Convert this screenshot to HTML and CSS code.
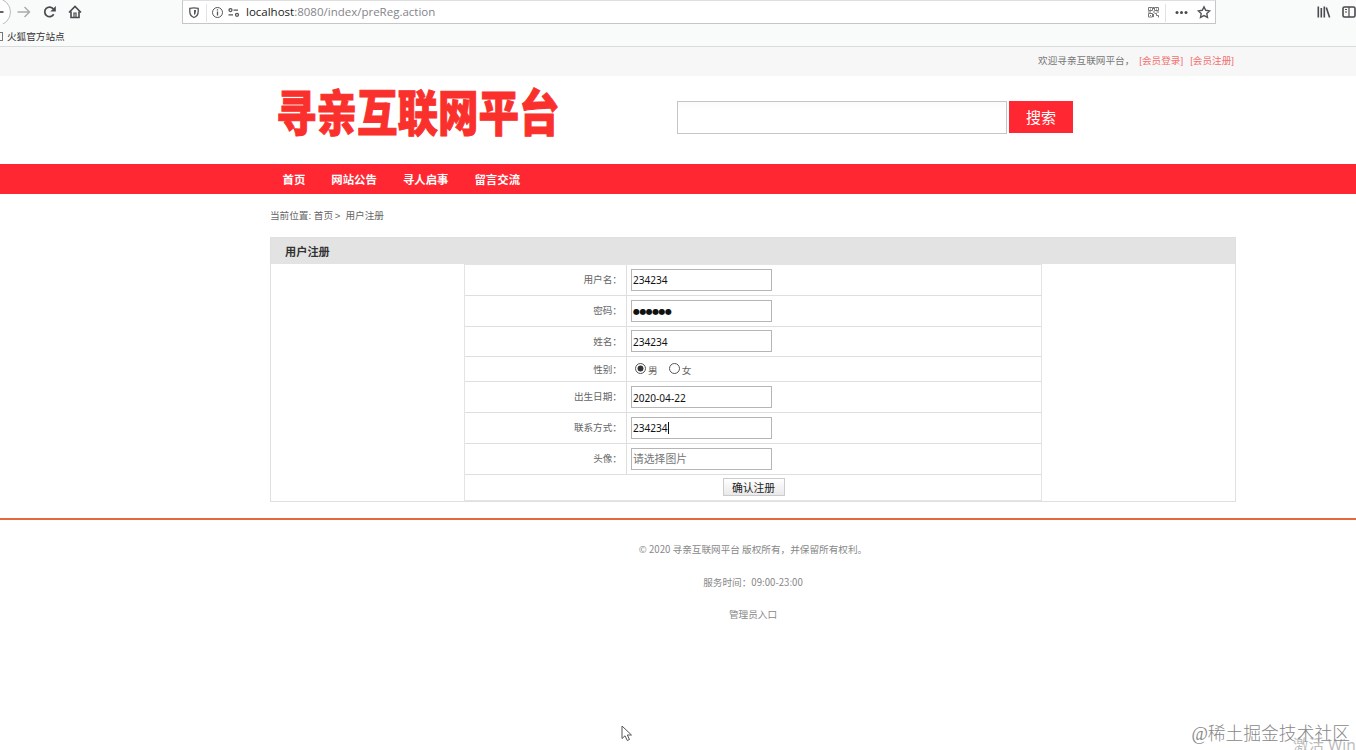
FILE: index.html
```html
<!DOCTYPE html>
<html lang="zh-CN">
<head>
<meta charset="UTF-8">
<meta name="viewport" content="width=device-width, initial-scale=1.0">
<title>用户注册</title>
<link rel="stylesheet" href="styles.css">
</head>
<body>

<div class="browser">
    <div class="toolbar">
        <svg class="nav-icons" width="90" height="24" viewBox="0 0 90 24" fill="none" stroke="#4a4a4f" stroke-width="1.7">
            <circle cx="-3" cy="12" r="13.5" fill="#fff" stroke="#bbb" stroke-width="1"/>
            <path d="M-6 12H3.500"/>
            <path d="M17.500 12H29.500M24.500 7L29.500 12L24.500 17" stroke="#aaa" stroke-width="1.4"/>
            <path d="M53.400 9A4.800 4.800 0 1 0 53.700 14.300"/>
            <path d="M55.800 6V11.500H50.300Z" fill="#4a4a4f" stroke="none"/>
            <path d="M69 12.500L75 6.500L81 12.500M71 11.500V17.500H79V11.500" stroke-width="1.6"/>
            <path d="M74 17V13H76V17" stroke-width="1.200"/>
        </svg>
        <div class="urlbar">
            <svg width="62" height="22" viewBox="0 0 62 22" fill="none" stroke="#55555a" stroke-width="1.300">
                <path d="M6.800 7.300Q11 6.300 15.200 7.300V10.500Q15.200 15 11 16.500Q6.800 15 6.800 10.500Z"/>
                <path d="M11 9V14Q13 13 13 10V9Z" fill="#55555a" stroke="none"/>
                <path d="M23.500 3V21" stroke="#e2e2e4" stroke-width="1"/>
                <circle cx="34.500" cy="11.500" r="5" stroke-width="1"/>
                <path d="M34.500 10.500V14.500M34.500 8.200V9.500"/>
                <circle cx="47.500" cy="9.100" r="1.500"/><path d="M50.500 9.100H55M45.500 13.800H50"/><circle cx="54" cy="13.800" r="1.500"/>
            </svg>
            <div class="url"><b>localhost</b>:8080/index/preReg.action</div>
            <svg class="url-actions" width="71" height="22" viewBox="0 0 71 22" fill="none" stroke="#55555a" stroke-width="1">
                <path d="M4.500 6.500H8.500V9.500H4.500ZM10.500 6.500H14.500V9.500H10.500ZM4.500 12.500H8.500V16H4.500ZM10.500 12.500H12.500V14.500H14.500V16.500M4 11H7M9 11H11M12.500 11H15M9.500 6V8M9.500 13V16M6 8H7M12 8H13M6 14.500H7" stroke="#77777b"/>
                <path d="M21.500 3V21" stroke="#e2e2e4"/>
                <g fill="#4a4a4f" stroke="none"><circle cx="33" cy="11.500" r="1.500"/><circle cx="37.500" cy="11.500" r="1.500"/><circle cx="42" cy="11.500" r="1.500"/></g>
                <path d="M60 5.800L61.700 9.300L65.600 9.900L62.800 12.600L63.500 16.400L60 14.600L56.500 16.400L57.200 12.600L54.400 9.900L58.300 9.300Z" stroke-width="1.400"/>
            </svg>
        </div>
        <svg class="side-icons" width="42" height="24" viewBox="0 0 42 24" fill="none" stroke="#4a4a4f" stroke-width="1.600">
            <path d="M4.300 6.500V17.500M7.300 8V17.500M10.300 6.500V17.500M12.300 7.500L15.600 17.500"/>
            <rect x="29" y="7" width="12" height="10" rx="1.500"/>
            <path d="M35 7V17M31 9.500H33M31 12H33" stroke-width="1.200"/>
        </svg>
    </div>
    <div class="bookmarks">
        <i class="page-icon"></i>
        <span>火狐官方站点</span>
    </div>
</div>

<div class="topbar">
    <span>欢迎寻亲互联网平台，</span>
    <a href="#">[会员登录]</a>
    <a href="#">[会员注册]</a>
</div>

<header class="header">
    <h1 class="logo">寻亲互联网平台</h1>
    <form class="search">
        <input type="text" class="search-input">
        <button type="button" class="search-btn">搜索</button>
    </form>
</header>

<nav class="nav">
    <a href="#">首页</a>
    <a href="#">网站公告</a>
    <a href="#">寻人启事</a>
    <a href="#">留言交流</a>
</nav>

<main class="main">
    <div class="crumb">当前位置: 首页 <span class="arrow">&gt;</span> 用户注册</div>
    <section class="panel">
        <h2>用户注册</h2>
        <form class="reg-form">
            <div class="row"><label>用户名：</label><div class="field"><input type="text" value="234234"></div></div>
            <div class="row"><label>密码：</label><div class="field"><input type="text" class="pwd" value="●●●●●●"></div></div>
            <div class="row"><label>姓名：</label><div class="field"><input type="text" value="234234"></div></div>
            <div class="row row-sex"><label>性别：</label>
                <div class="field">
                    <i class="radio checked"></i><span>男</span>
                    <i class="radio female"></i><span>女</span>
                </div>
            </div>
            <div class="row"><label>出生日期：</label><div class="field"><input type="text" value="2020-04-22"></div></div>
            <div class="row"><label>联系方式：</label><div class="field"><div class="focused">234234<i class="caret"></i></div></div></div>
            <div class="row"><label>头像：</label><div class="field"><input type="text" placeholder="请选择图片"></div></div>
            <div class="row-submit"><button type="button">确认注册</button></div>
        </form>
    </section>
</main>

<footer class="footer">
    <p>© 2020 寻亲互联网平台 版权所有，并保留所有权利。</p>
    <p>服务时间：09:00-23:00</p>
    <p>管理员入口</p>
</footer>

<svg class="cursor" width="12" height="17" viewBox="0 0 12 17" fill="#fff" stroke="#555" stroke-width="1">
    <path d="M1 1V13.500L4 10.800L6.300 15.500L8.500 14.500L6.300 10H10.500Z"/>
</svg>
<div class="activate">激活 Win</div>
<div class="watermark">@稀土掘金技术社区</div>

</body>
</html>
```
FILE: styles.css
```css
* {
    box-sizing: border-box;
}
body {
    margin: 0;
    height: 750px;
    position: relative;
    overflow: hidden;
    background: #fff;
    color: #666;
    font-family: "Liberation Sans", "Noto Sans CJK SC", sans-serif;
    font-size: 9.65px;
}
a {
    text-decoration: none;
}
svg {
    display: block;
    flex: none;
}

/* browser chrome */
.browser {
    height: 47px;
    background: #f9fafa;
    border-bottom: 1px solid #d9dcdc;
}
.toolbar {
    display: flex;
    height: 25px;
}
.urlbar {
    display: flex;
    width: 1034px;
    height: 24px;
    margin-left: 92px;
    background: #fff;
    border: 1px solid #c6c6c6;
    border-top-color: #dedede;
}
.url {
    margin-left: 1px;
    font: 11.5px/22px "Open Sans", sans-serif;
    color: #85858a;
}
.url b {
    font-weight: 500;
    color: #1c1c20;
}
.url-actions {
    margin-left: auto;
}
.side-icons {
    margin-left: auto;
}
.bookmarks {
    display: flex;
    align-items: center;
    height: 23px;
    color: #333;
}
.bookmarks span {
    line-height: 20px;
}
.page-icon {
    width: 5px;
    height: 9px;
    margin-left: -2px;
    margin-right: 4px;
    border: 1px solid #777;
}

/* header */
.topbar {
    display: flex;
    justify-content: flex-end;
    align-items: center;
    height: 29px;
    padding: 0 122px 3px 0;
    background: #f7f7f7;
    color: #777;
}
.topbar a {
    margin-left: 7px;
    color: #f2706f;
}
.topbar span {
    margin-right: -2px;
}
.header {
    display: flex;
    height: 88px;
    padding-left: 276px;
}
.logo {
    width: 401px;
    margin: 0;
    color: #f9302b;
    font: 900 40.5px/60px "Noto Sans CJK SC", sans-serif;
    transform: scaleY(1.2);
    transform-origin: 0 30px;
    padding-top: 4px;
    white-space: nowrap;
    -webkit-text-stroke: 0.8px #f9302b;
}
.search {
    display: flex;
    gap: 2px;
    margin-top: 25px;
}
.search-input {
    width: 330px;
    height: 33px;
    border: 1px solid #c5c5c5;
    background: linear-gradient(#fafafa, #fff 10px);
}
.search-btn {
    width: 64px;
    height: 32px;
    padding: 0 0 2px;
    border: 0;
    background: #ff2832;
    color: #fff;
    font: 15px "Noto Sans CJK SC", sans-serif;
}
.nav {
    display: flex;
    align-items: center;
    gap: 26px;
    height: 30px;
    padding-left: 282.5px;
    background: #ff2832;
}
.nav a {
    color: #fff;
    font-size: 11.4px;
    font-weight: bold;
}

/* register form */
.main {
    width: 966px;
    margin-left: 270px;
}
.crumb {
    height: 43px;
    line-height: 43px;
}
.arrow {
    display: inline-block;
    width: 6px;
    margin-left: -1px;
    margin-right: 2px;
}
.panel {
    height: 265px;
    border: 1px solid #e0e0e0;
}
.panel h2 {
    height: 26px;
    margin: 0;
    padding-left: 14px;
    background: #e3e3e3;
    color: #333;
    font-size: 11.2px;
    line-height: 28px;
}
.reg-form {
    width: 578px;
    margin: 0 auto;
    border: 1px solid #e4e4e4;
}
.row {
    display: flex;
    height: 30.8px;
    border-bottom: 1px solid #dedede;
}
.row label {
    width: 162px;
    padding: 0 4px 0 0;
    border-right: 1px solid #dedede;
    line-height: 30px;
    text-align: right;
}
.field {
    display: flex;
    align-items: center;
    padding-left: 4px;
}
.field input,
.focused {
    width: 141px;
    height: 22px;
    padding: 1px 1px 0;
    border: 1px solid #b5b5b5;
    color: #111;
    background: #fff;
    font: 10.1px/20px "Noto Sans", "Noto Sans CJK SC", sans-serif;
}
.focused {
    line-height: 18px;
}
.field input::placeholder {
    color: #777;
    font-size: 10.8px;
}
.field .pwd {
    font: 8px "DejaVu Sans", sans-serif;
    letter-spacing: -0.6px;
}
.caret {
    display: inline-block;
    width: 1px;
    height: 12px;
    margin-top: -3px;
    background: #111;
    vertical-align: middle;
}
.row-sex {
    height: 25px;
}
.row-sex label {
    line-height: 26px;
}
.row-sex span {
    padding-top: 1px;
}
.radio {
    width: 11px;
    height: 11px;
    margin: 0 2px 1px 4px;
    border: 1px solid #555;
    border-radius: 50%;
}
.checked {
    background: radial-gradient(circle, #333 0 2.7px, #fff 3.3px);
}
.female {
    margin-left: 11px;
}
.row-submit {
    display: flex;
    justify-content: center;
    align-items: center;
    height: 25px;
    padding-left: 1px;
}
.row-submit button {
    width: 62px;
    height: 18px;
    padding: 0;
    border: 1px solid #ccc;
    background: linear-gradient(#fff, #e9e9e9);
    color: #222;
    font: 10.8px/15px "Noto Sans CJK SC", sans-serif;
}

.footer {
    margin-top: 16px;
    padding: 14px 0 0 150px;
    border-top: 2px solid #e4683c;
    color: #888;
    font-family: "Noto Sans CJK SC", sans-serif;
    text-align: center;
}
.footer p {
    height: 32.5px;
    margin: 0;
    line-height: 31px;
}

/* screen overlays */
.cursor {
    position: absolute;
    left: 621px;
    top: 725px;
}
.watermark {
    position: absolute;
    right: 6px;
    top: 721px;
    color: #888;
    font: 300 17.8px/26px "Liberation Serif", "Noto Sans CJK SC", serif;
    white-space: nowrap;
}
.activate {
    position: absolute;
    left: 1293px;
    top: 736px;
    color: #bbb;
    font: 15.5px/18px "Open Sans", "Noto Sans CJK SC", sans-serif;
    white-space: nowrap;
}
```
